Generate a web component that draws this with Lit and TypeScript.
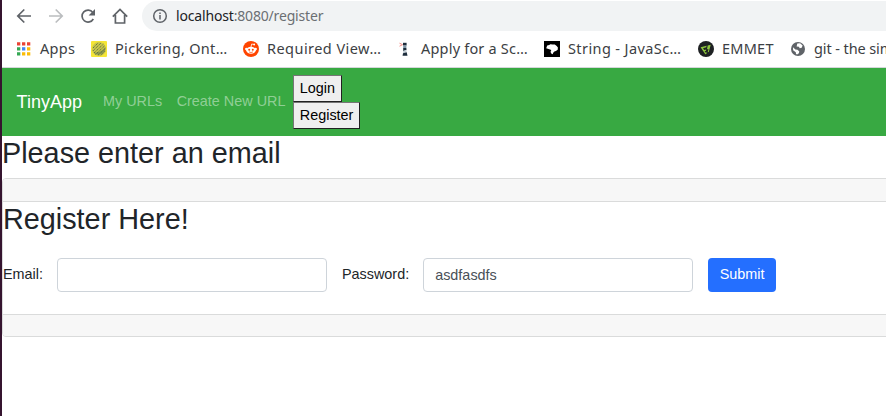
import { LitElement, html, css, svg } from "lit";
import { customElement } from "lit/decorators.js";

const icons = {
  apps: svg`<g transform="translate(2 1.200)">
    <path fill="#ea4335" d="M0 0h3.300v3.300H0zM5 0h3.300v3.300H5zM10 0h3.300v3.300H10z"/>
    <path fill="#34a853" d="M0 5h3.300v3.300H0zM0 10h3.300v3.300H0z"/>
    <path fill="#4285f4" d="M5 5h3.300v3.300H5z"/>
    <path fill="#fbbc05" d="M10 5h3.300v3.300H10zM5 10h3.300v3.300H5zM10 10h3.300v3.300H10z"/></g>`,
  pickering: svg`<rect width="16" height="16" rx="1" fill="#f5e636"/>
    <circle cx="8" cy="8" r="7" fill="#c9c648"/>
    <path d="M14.500 6a7 7 0 0 1-12 5.500q7 1 12-5.500z" fill="#8d9a4c"/>
    <g stroke="#5d6f45" stroke-width="1" stroke-dasharray="1.300 .8" fill="none">
    <path d="M2 7l5-5M1.800 10L10 2M3 12l9.500-9M4.500 13.500l9.500-9M7 14.200l7.500-7M10 14.200l4.500-4.500"/></g>`,
  reddit: svg`<circle cx="8" cy="8" r="8" fill="#ff4500"/>
    <ellipse cx="8" cy="9.300" rx="4.800" ry="3.500" fill="#fff"/>
    <circle cx="3.300" cy="8" r="1.200" fill="#fff"/><circle cx="12.700" cy="8" r="1.200" fill="#fff"/>
    <path d="M8 6l.7-3 2.300.5" stroke="#fff" stroke-width=".8" fill="none"/>
    <circle cx="11.200" cy="3.500" r=".9" fill="#fff"/>
    <circle cx="6.200" cy="8.700" r="1" fill="#ff4500"/><circle cx="9.800" cy="8.700" r="1" fill="#ff4500"/>
    <path d="M6 10.900q2 1.300 4 0" stroke="#ff4500" stroke-width=".7" fill="none"/>`,
  lighthouse: svg`<path d="M2.500 2.200l3 1.500-3 1.500" stroke="#f58d86" stroke-width="1" fill="none"/>
    <path d="M6 1.800h3.600v2.700H6z" fill="#1d2d3c"/><path d="M6.200 4.500h3.200v2.500H6.200z" fill="#7f95a6"/>
    <path d="M6.200 7h3.200l.1 2-3.300 1z" fill="#1d2d3c"/><path d="M6.200 10l3.300-1v2.300l-3.500 1z" fill="#c3ced6"/>
    <path d="M6 12.300l3.700-1 .8 3.500H5.600z" fill="#1d2d3c"/>`,
  mdn: svg`<path d="M0 0h16v16H0z"/>
    <path fill="#fff" d="M2.200 7.300l1-2.700 2-.7 1.200-.7 2.200.2 2.200.2 1.900 1.300 1.200 1.700-.2 2.200-1.800 1.200-1.500.5-1.200 1.300-.5 1.500-1.200-.5-1-1.700.8-2-2-.9z"/>`,
  emmet: svg`<circle cx="8" cy="8" r="8" fill="#1e2123"/>
    <path d="M2.600 6.300l6-1.600-.3 1.600-3.300.9 1.200 1.800 2-.5-.2 1.300-1.300.5.800 1.200 1.200-.3-.3 1.800-1.100.3zM9.700 4.400l3-.7-1.900 7.200-1.100.3.800-3.200-1.500.3z" fill="#8dc63f"/>`,
  globe: svg`<circle cx="8" cy="8" r="7" fill="#5f6368"/>
    <path fill="#fff" d="M3 6.200l2.400 2.300 2.100.3 1.800 1.600-.4 1.800-1.800 1.200L6 13l-.2-1.800-2.700-2zM7.300 2.500l2.800-.2 2.500 2.200-.9 2.200-2 .5-.8-1.500-2.300-.2z"/>`,
};

const bookmarks = [
  { name: "apps", icon: icons.apps, label: "Apps" },
  { name: "pickering", icon: icons.pickering, label: "Pickering, Ont…" },
  { name: "reddit", icon: icons.reddit, label: "Required View…" },
  { name: "apply", icon: icons.lighthouse, label: "Apply for a Sc…" },
  { name: "mdn", icon: icons.mdn, label: "String - JavaSc…" },
  { name: "emmet", icon: icons.emmet, label: "EMMET" },
  { name: "git", icon: icons.globe, label: "git - the sim" },
];

@customElement("browser-chrome")
export class BrowserChrome extends LitElement {
  static styles = css`
    :host { display: block; font-family: "Noto Sans", sans-serif; }
    svg { display: block; flex: none; }
    .toolbar { display: flex; align-items: center; height: 30px; padding: 1px 0 0 12px; }
    .nav { width: 20px; height: 20px; margin-right: 12px; fill: none; stroke: #5f6368; stroke-width: 1.7; }
    .off { stroke: #bbbdbf; }
    .omnibox { flex: 1; display: flex; align-items: center; height: 30px; background: #f1f3f4; border-radius: 15px 0 0 15px; padding-left: 10px; }
    .info { width: 16px; height: 16px; margin-right: 8px; fill: none; stroke: #5f6368; stroke-width: 1.5; }
    .url { font-size: 14px; line-height: 20px; color: #6b6f73; letter-spacing: -0.17px; margin-top: -1px; }
    .host { color: #202124; }
    .bookmarks { display: flex; align-items: center; height: 36px; padding-left: 13px; }
    .bookmark { display: flex; align-items: center; flex: none; white-space: nowrap; font-size: 14.5px; line-height: 20px; color: #3c4043; }
    .text { margin-top: -2px; }
    .favicon { width: 16px; height: 16px; margin-right: 8px; }
    .apps { width: 76px; letter-spacing: 0.3px; }
    .apps .favicon { margin-right: 9px; }
    .pickering { width: 152px; letter-spacing: 0.32px; }
    .reddit { width: 154px; letter-spacing: 0.45px; }
    .apply { width: 147px; letter-spacing: 0.2px; }
    .mdn { width: 154px; letter-spacing: 0.4px; }
    .emmet { width: 92px; letter-spacing: 0.25px; }
    .git { letter-spacing: -0.1px; }
  `;

  render() {
    return html`
      <div class="toolbar">
        <svg class="nav" viewBox="0 0 20 20"><path d="M17 10H4M10.300 3.500L3.800 10l6.500 6.500"/></svg>
        <svg class="nav off" viewBox="0 0 20 20"><path d="M3 10h13M9.700 3.500l6.500 6.500-6.500 6.500"/></svg>
        <svg class="nav" viewBox="0 0 20 20"><path d="M15.300 13a6 6 0 1 1-.5-6.600"/><path fill="#5f6368" stroke="none" d="M17 3v6.400h-6.400z"/></svg>
        <svg class="nav" viewBox="0 0 20 20"><path d="M2.800 10.600L10 3.400l7.200 7.200M5.400 9v8h9.200V9"/></svg>
        <div class="omnibox">
          <svg class="info" viewBox="0 0 16 16"><circle cx="8" cy="8" r="6.300"/><path d="M8 7v4.500M8 4.400v1.600"/></svg>
          <span class="url"><span class="host">localhost</span>:8080/register</span>
        </div>
      </div>
      <div class="bookmarks">
        ${bookmarks.map((b) => html`<div class="bookmark ${b.name}"><svg class="favicon" viewBox="0 0 16 16">${b.icon}</svg><span class="text">${b.label}</span></div>`)}
      </div>
    `;
  }
}

@customElement("app-root")
export class AppRoot extends LitElement {
  static styles = css`
    :host { display: block; box-sizing: border-box; width: 886px; height: 416px; overflow: hidden; border-left: 2px solid #35142f; background: #fff; color: #212529; font: 14.4px/21.6px "Liberation Sans", Arial, sans-serif; }
    * { box-sizing: border-box; }
    .browser { height: 68px; border-bottom: 1px solid #d5d7da; overflow: hidden; }
    .navbar { display: flex; align-items: center; height: 68px; background: #38a942; padding-left: 14.600px; }
    .brand { width: 86.400px; font-size: 18px; line-height: 27px; color: #fff; }
    .link { color: rgba(255, 255, 255, 0.45); margin-right: 14.5px; white-space: nowrap; }
    .link.last { margin-right: 7.4px; }
    .actions { display: flex; flex-direction: column; align-items: flex-start; }
    .action { height: 27px; border: 1px solid; border-color: #767676 #212121 #212121 #767676; background: #efefef; color: #000; padding: 0 6px; font: inherit; line-height: 25px; }
    .title { font-size: 28.8px; font-weight: 400; line-height: 34.56px; margin: 0; white-space: nowrap; }
    .page-title { height: 42px; }
    .card { width: 900px; height: 159px; border: 1px solid #dadbdb; border-radius: 4px; display: flex; flex-direction: column; }
    .strip { height: 23px; background: #f7f7f7; border-bottom: 1px solid #dadbdb; border-radius: 3px 3px 0 0; }
    .strip.foot { height: 22px; border: 0; border-top: 1px solid #dadbdb; border-radius: 0 0 3px 3px; margin-top: auto; }
    .form { display: flex; align-items: center; height: 34px; margin-top: 21px; }
    .label { white-space: nowrap; }
    .field { width: 270px; height: 34px; border: 1px solid #ced4da; border-radius: 4px; padding: 0 11px; margin: 0 15px 0 14px; font: inherit; color: #495057; background: #fff; outline: 0; }
    .submit { width: 68px; height: 34px; border: 0; border-radius: 4px; background: #246fff; color: #fff; padding: 0; font: inherit; }
  `;

  render() {
    return html`
      <browser-chrome class="browser"></browser-chrome>
      <nav class="navbar">
        <span class="brand">TinyApp</span>
        <span class="link">My URLs</span>
        <span class="link last">Create New URL</span>
        <div class="actions">
          <button class="action">Login</button>
          <button class="action">Register</button>
        </div>
      </nav>
      <h1 class="title page-title">Please enter an email</h1>
      <section class="card">
        <div class="strip"></div>
        <h2 class="title">Register Here!</h2>
        <div class="form">
          <label class="label">Email:</label>
          <input class="field" />
          <label class="label">Password:</label>
          <input class="field" value="asdfasdfs" />
          <button class="submit">Submit</button>
        </div>
        <div class="strip foot"></div>
      </section>
    `;
  }
}
